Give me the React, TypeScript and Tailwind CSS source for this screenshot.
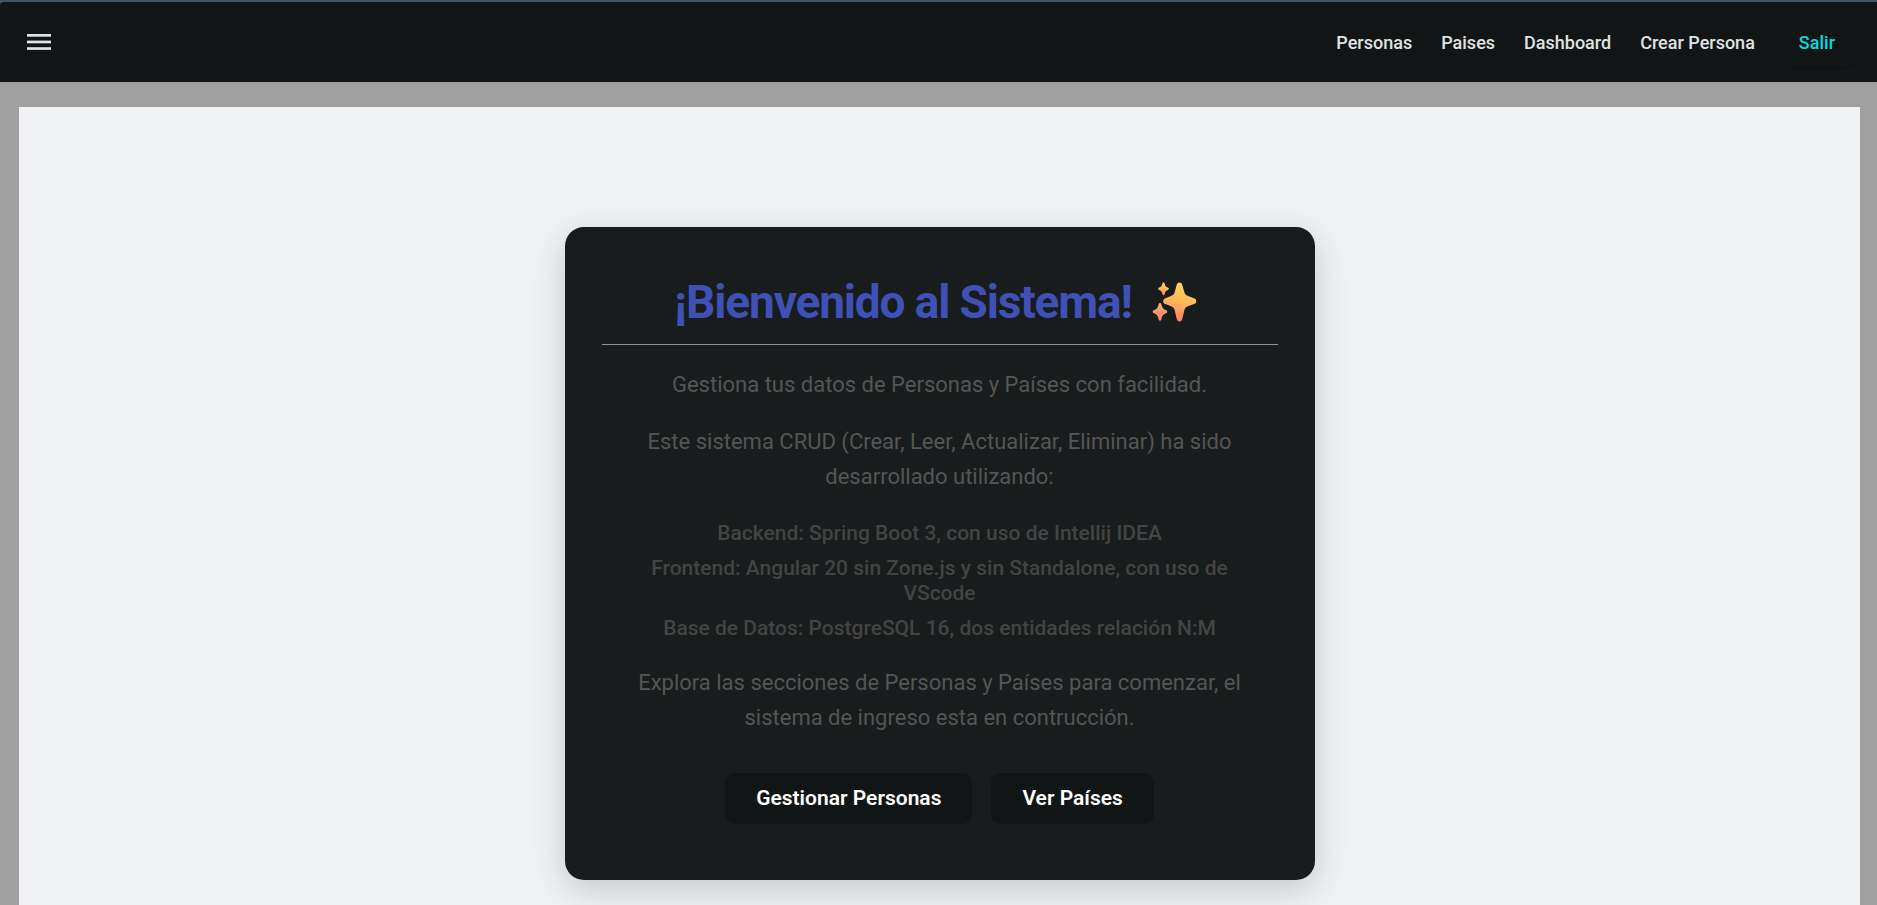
const links = ['Personas', 'Paises', 'Dashboard', 'Crear Persona'];

const stack = [
  'Backend: Spring Boot 3, con uso de Intellij IDEA',
  'Frontend: Angular 20 sin Zone.js y sin Standalone, con uso de VScode',
  'Base de Datos: PostgreSQL 16, dos entidades relación N:M',
];

function MenuIcon() {
  return (
    <svg width="24" height="16" viewBox="0 0 24 16" aria-hidden="true" fill="#dbe6e4">
      <rect width="24" height="2.700" />
      <rect y="6.600" width="24" height="2.700" />
      <rect y="13.200" width="24" height="2.700" />
    </svg>
  );
}

function Sparkles() {
  return (
    <svg width="45" height="40" viewBox="0 0 45 40" aria-hidden="true">
      <defs>
        <linearGradient id="spark" x1="0.6" y1="0" x2="0.4" y2="1">
          <stop offset="0" stopColor="#ffd65c" />
          <stop offset="0.5" stopColor="#ffb65a" />
          <stop offset="1" stopColor="#ff8062" />
        </linearGradient>
        <linearGradient id="sparkLow" x1="0.6" y1="0" x2="0.4" y2="1">
          <stop offset="0" stopColor="#ffb266" />
          <stop offset="1" stopColor="#ff7a70" />
        </linearGradient>
      </defs>
      <path
        fill="url(#spark)"
        d="M27.500 .5C29 .5 29.900 1.500 30.400 3.200L32.300 10C32.900 12.100 33.800 13.300 36 14L42 16.200C43.600 16.800 44.300 17.800 44.300 19.200C44.300 20.600 43.600 21.500 42 22.100L36 24.300C33.800 25.100 32.900 26.300 32.300 28.300L30.400 36.500C29.900 38.500 29 39.500 27.500 39.500C26 39.500 25.100 38.500 24.600 36.500L22.700 28.300C22.100 26.300 21.200 25.100 19 24.300L13.500 22.100C12 21.500 11.200 20.600 11.200 19.200C11.200 17.800 12 16.800 13.500 16.200L19 14C21.200 13.300 22.100 12.100 22.700 10L24.600 3.200C25.100 1.500 26 .5 27.500 .5Z"
      />
      <path
        fill="url(#spark)"
        d="M11.500 .5C12.200 .5 12.500 1 12.700 1.700C13.200 4 13.700 4.700 15.800 5.600C16.500 5.900 16.900 6.300 16.900 6.800C16.900 7.300 16.500 7.700 15.800 8C13.700 8.900 13.200 9.600 12.700 12C12.500 12.700 12.200 13.200 11.500 13.200C10.800 13.200 10.500 12.700 10.300 12C9.800 9.600 9.300 8.900 7.200 8C6.500 7.700 6.100 7.300 6.100 6.800C6.100 6.300 6.500 5.900 7.200 5.600C9.300 4.700 9.800 4 10.300 1.700C10.500 1 10.800 .5 11.500 .5Z"
      />
      <path
        fill="url(#sparkLow)"
        d="M8 21C8.800 21 9.200 21.600 9.500 22.500C10.200 25.800 11 27 13.900 28.100C14.800 28.500 15.200 29 15.200 29.700C15.200 30.400 14.800 30.900 13.900 31.300C11 32.400 10.200 33.600 9.500 37.200C9.200 38.100 8.800 38.700 8 38.700C7.200 38.700 6.800 38.100 6.500 37.200C5.800 33.600 5 32.400 2.100 31.300C1.200 30.900 .7 30.400 .7 29.700C.7 29 1.200 28.500 2.100 28.100C5 27 5.800 25.800 6.500 22.500C6.800 21.600 7.200 21 8 21Z"
      />
    </svg>
  );
}

export default function App() {
  return (
    <div className="flex min-h-screen flex-col bg-[#a0a0a0] font-['Roboto',sans-serif]">
      <div className="bg-[#42526a] pt-0.5">
        <header className="flex h-20 items-center justify-between rounded-tl-sm bg-[#111515] pr-3 pl-[27px]">
          <button type="button" aria-label="Menú">
            <MenuIcon />
          </button>
          <nav className="flex items-center gap-3.5 pt-0.5 text-lg font-medium text-[#e0e3e2]">
            <ul className="flex gap-[29px]">
              {links.map((label) => (
                <li key={label}>
                  <a href="#">{label}</a>
                </li>
              ))}
            </ul>
            <button
              type="button"
              className="h-12 rounded-full px-[30px] text-[#00dddd] shadow-[0_1px_2px_rgba(0,0,0,0.2)]"
            >
              Salir
            </button>
          </nav>
        </header>
      </div>

      <main className="mt-[25px] mr-[17px] ml-[19px] flex grow justify-center bg-[#f0f2f6] pt-[120px] pb-6">
        <section className="w-full max-w-[750px] self-start rounded-[19px] bg-[#191c1c] px-[37px] pt-[50px] pb-14 text-center shadow-[0_10px_36px_rgba(0,0,0,0.18)]">
          <div className="flex items-center justify-center gap-5 border-b border-[#8a9491] pr-2 pb-[17px]">
            <h1 className="text-[46px] leading-[50px] font-bold tracking-tight text-[#3f51b5]">
              ¡Bienvenido al Sistema!
            </h1>
            <Sparkles />
          </div>
          <div className="px-4 pt-[22px] text-[22px] leading-[35px] text-[#555555]">
            <p>Gestiona tus datos de Personas y Países con facilidad.</p>
            <p className="mt-[22px]">
              Este sistema CRUD (Crear, Leer, Actualizar, Eliminar) ha sido desarrollado utilizando:
            </p>
            <ul className="mt-[27px] mb-6 flex flex-col gap-2.5 text-[21px] leading-[25px] font-medium text-[#444444]">
              {stack.map((item) => (
                <li key={item}>{item}</li>
              ))}
            </ul>
            <p>
              Explora las secciones de Personas y Países para comenzar, el sistema de ingreso esta en
              contrucción.
            </p>
          </div>
          <div className="mt-[38px] flex justify-center gap-[19px] text-[21px] font-semibold text-white">
            <button type="button" className="h-[51px] rounded-[10px] bg-[#111515] px-[31px]">
              Gestionar Personas
            </button>
            <button type="button" className="h-[51px] rounded-[10px] bg-[#111515] px-[31px]">
              Ver Países
            </button>
          </div>
        </section>
      </main>
    </div>
  );
}
